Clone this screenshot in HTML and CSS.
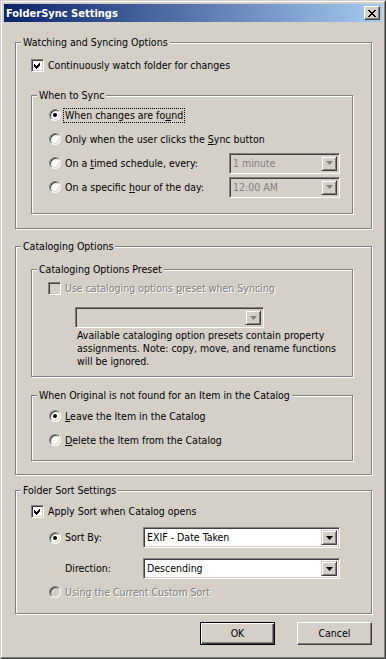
FILE: index.html
```html
<!DOCTYPE html>
<html lang="en">
<head>
    <meta charset="UTF-8">
    <meta name="viewport" content="width=device-width, initial-scale=1.0">
    <title>FolderSync Settings</title>
    <link rel="stylesheet" href="styles.css">
</head>
<body>
    <div class="window">
        <div class="frame">
            <!-- Title bar -->
            <div class="titlebar">
                <span class="title">FolderSync Settings</span>
                <span class="close-btn">
                    <svg width="8" height="7" viewBox="0 0 8 7" shape-rendering="crispEdges"><path fill="#000" d="M0 0h2v1h-2z M6 0h2v1h-2z M1 1h2v1h-2z M5 1h2v1h-2z M2 2h4v1h-4z M3 3h2v1h-2z M2 4h4v1h-4z M1 5h2v1h-2z M5 5h2v1h-2z M0 6h2v1h-2z M6 6h2v1h-2z"/></svg>
                </span>
            </div>

            <div class="dialog">
                <!-- Watching and Syncing -->
                <fieldset class="group">
                    <legend>Watching and Syncing Options</legend>
                    <div class="group-body watch-body">
                        <div class="check-row first-check">
                            <span class="checkbox"><svg width="7" height="7" viewBox="0 0 7 7" shape-rendering="crispEdges"><polygon fill="#000" points="0,2 2,4 6,0 6,3 2,7 0,5"/></svg></span>
                            <span>Continuously watch folder for changes</span>
                        </div>
                        <fieldset class="group sync-group">
                            <legend>When to Sync</legend>
                            <div class="option-list sync-body">
                                <div class="row"><span class="radio on"></span><span class="focus">When changes are fo<u>u</u>nd</span></div>
                                <div class="row"><span class="radio"></span><span>Only when the user clicks the <u>S</u>ync button</span></div>
                                <div class="row">
                                    <span class="radio"></span><span class="timed-label">On a <u>t</u>imed schedule, every:</span>
                                    <span class="combo disabled timed-combo"><span class="combo-text">1 minute</span><span class="combo-btn"><svg width="7" height="4" viewBox="0 0 7 4"><polygon fill="#808080" points="0,0 7,0 3.5,4"/></svg></span></span>
                                </div>
                                <div class="row">
                                    <span class="radio"></span><span class="timed-label">On a specific <u>h</u>our of the day:</span>
                                    <span class="combo disabled timed-combo"><span class="combo-text">12:00 AM</span><span class="combo-btn"><svg width="7" height="4" viewBox="0 0 7 4"><polygon fill="#808080" points="0,0 7,0 3.5,4"/></svg></span></span>
                                </div>
                            </div>
                        </fieldset>
                    </div>
                </fieldset>

                <!-- Cataloging -->
                <fieldset class="group catalog-group">
                    <legend>Cataloging Options</legend>
                    <div class="group-body catalog-body">
                        <fieldset class="group preset-group">
                            <legend>Cataloging Options Preset</legend>
                            <div class="preset-body">
                                <div class="check-row preset-check disabled-text">
                                    <span class="checkbox off"></span>
                                    <span>Use cataloging options <u>p</u>reset when Syncing</span>
                                </div>
                                <span class="combo disabled preset-combo"><span class="combo-text"></span><span class="combo-btn"><svg width="7" height="4" viewBox="0 0 7 4"><polygon fill="#808080" points="0,0 7,0 3.5,4"/></svg></span></span>
                                <p class="note">Available cataloging option presets contain property<br>assignments. Note: copy, move, and rename functions<br>will be ignored.</p>
                            </div>
                        </fieldset>
                        <fieldset class="group original-group">
                            <legend>When Original is not found for an Item in the Catalog</legend>
                            <div class="option-list original-body">
                                <div class="row"><span class="radio on"></span><span><u>L</u>eave the Item in the Catalog</span></div>
                                <div class="row"><span class="radio"></span><span><u>D</u>elete the Item from the Catalog</span></div>
                            </div>
                        </fieldset>
                    </div>
                </fieldset>

                <!-- Folder sort -->
                <fieldset class="group sort-group">
                    <legend>Folder Sort Settings</legend>
                    <div class="group-body sort-body">
                        <div class="check-row sort-check">
                            <span class="checkbox"><svg width="7" height="7" viewBox="0 0 7 7" shape-rendering="crispEdges"><polygon fill="#000" points="0,2 2,4 6,0 6,3 2,7 0,5"/></svg></span>
                            <span>Apply Sort when Catalog opens</span>
                        </div>
                        <div class="sort-row sort-by">
                            <span class="radio on"></span><span class="sort-label">Sort By:</span>
                            <span class="combo sort-combo"><span class="combo-text">EXIF - Date Taken</span><span class="combo-btn"><svg width="7" height="4" viewBox="0 0 7 4"><polygon fill="#000" points="0,0 7,0 3.5,4"/></svg></span></span>
                        </div>
                        <div class="sort-row direction">
                            <span class="sort-label">Direction:</span>
                            <span class="combo sort-combo"><span class="combo-text">Descending</span><span class="combo-btn"><svg width="7" height="4" viewBox="0 0 7 4"><polygon fill="#000" points="0,0 7,0 3.5,4"/></svg></span></span>
                        </div>
                        <div class="row custom-row disabled-text">
                            <span class="radio off"></span><span>Using the Current Custom Sort</span>
                        </div>
                    </div>
                </fieldset>

                <div class="buttons">
                    <button type="button" class="btn default">OK</button>
                    <button type="button" class="btn">Cancel</button>
                </div>
            </div>
        </div>
    </div>
</body>
</html>
```

FILE: styles.css
```css
/* Classic Windows dialog */
body {
    margin: 0;
    font-family: "DejaVu Sans Condensed", "Liberation Sans", sans-serif;
    font-size: 10.5px;
    line-height: 13px;
    color: #000;
    background: #d4d0c8;
}

.window {
    width: 386px;
    height: 659px;
    box-sizing: border-box;
    border: 1px solid;
    border-color: #d4d0c8 #404040 #404040 #d4d0c8;
}

.frame {
    height: 100%;
    box-sizing: border-box;
    border: 1px solid;
    border-color: #fff #808080 #808080 #fff;
    padding: 2px;
}

.titlebar {
    height: 18px;
    display: flex;
    align-items: center;
    justify-content: space-between;
    padding: 0 2px;
    background: linear-gradient(to right, #0a246a, #a6caf0);
}

.title {
    color: #fff;
    font-weight: bold;
    font-size: 11px;
}

.close-btn {
    width: 16px;
    height: 14px;
    box-sizing: border-box;
    display: flex;
    align-items: center;
    justify-content: center;
    background: #d4d0c8;
    border: 1px solid;
    border-color: #fff #404040 #404040 #fff;
    box-shadow: inset -1px -1px 0 #808080;
}

.dialog {
    padding: 14px 10px 0 11px;
}

/* Group boxes */
.group {
    margin: 0;
    padding: 0;
    min-width: 0;
    border: 1px solid #808080;
    box-shadow: inset 1px 1px 0 #fff, 1px 1px 0 #fff;
}

.group legend {
    margin-left: 5px;
    padding: 0 2px;
    line-height: 13px;
    background: #d4d0c8;
}

.watch-body,
.catalog-body {
    padding: 0 18px 14px 15px;
}

.catalog-body {
    padding-bottom: 13px;
}

.sort-body {
    padding: 0 18px 11px 15px;
}

.catalog-group {
    margin-top: 11px;
}

.sort-group {
    margin-top: 9px;
}

.sync-group {
    margin-top: 16px;
}

.preset-group {
    margin-top: 10px;
}

.original-group {
    margin-top: 12px;
}

.option-list {
    display: flex;
    flex-direction: column;
    gap: 4px;
}

.sync-body {
    padding: 3px 0 16px 17px;
}

.original-body {
    padding: 4px 0 10px 17px;
}

.preset-body {
    padding: 0 0 8px 16px;
}

/* Rows */
.row {
    display: flex;
    align-items: center;
    height: 20px;
}

.check-row {
    display: flex;
    align-items: center;
    height: 16px;
}

.first-check {
    margin-top: 8px;
}

.preset-check {
    margin-top: 4px;
}

.sort-check {
    margin-top: 6px;
}

.sort-row {
    display: flex;
    align-items: center;
    height: 21px;
    padding-left: 18px;
}

.sort-by {
    margin-top: 8px;
}

.direction {
    margin-top: 10px;
    padding-left: 34px;
}

.custom-row {
    margin-top: 3px;
    padding-left: 18px;
}

.timed-label {
    width: 164px;
}

.sort-label {
    width: 78px;
}

.focus {
    outline: 1px dotted #000;
    padding: 0 1px;
    margin-left: -1px;
}

.disabled-text {
    color: #808080;
    text-shadow: 1px 1px 0 #fff;
}

/* Checkbox and radio */
.checkbox {
    width: 13px;
    height: 13px;
    flex: none;
    box-sizing: border-box;
    display: flex;
    align-items: center;
    justify-content: center;
    margin-right: 4px;
    background: #fff;
    border: 1px solid;
    border-color: #808080 #fff #fff #808080;
    box-shadow: inset 1px 1px 0 #404040, inset -1px -1px 0 #d4d0c8;
}

.checkbox.off {
    background: #d4d0c8;
}

.radio {
    width: 12px;
    height: 12px;
    flex: none;
    box-sizing: border-box;
    display: flex;
    align-items: center;
    justify-content: center;
    margin-right: 4px;
    border-radius: 50%;
    background: #fff;
    border: 1px solid;
    border-color: #808080 #fff #fff #808080;
    box-shadow: inset 1px 1px 0 #404040, inset -1px -1px 0 #d4d0c8;
}

.radio.on::after {
    content: "";
    width: 4px;
    height: 4px;
    border-radius: 50%;
    background: #000;
}

.radio.off {
    background: #d4d0c8;
}

/* Combo boxes */
.combo {
    height: 21px;
    box-sizing: border-box;
    display: flex;
    align-items: stretch;
    padding: 2px;
    background: #fff;
    border: 1px solid;
    border-color: #808080 #fff #fff #808080;
    box-shadow: inset 1px 1px 0 #404040, inset -1px -1px 0 #d4d0c8;
    text-shadow: none;
}

.combo.disabled {
    background: #d4d0c8;
    color: #808080;
}

.combo-text {
    flex: 1;
    display: flex;
    align-items: center;
    padding-left: 1px;
    white-space: nowrap;
}

.combo-btn {
    width: 16px;
    flex: none;
    box-sizing: border-box;
    display: flex;
    align-items: center;
    justify-content: center;
    background: #d4d0c8;
    border: 1px solid;
    border-color: #d4d0c8 #404040 #404040 #d4d0c8;
    box-shadow: inset 1px 1px 0 #fff, inset -1px -1px 0 #808080;
}

.timed-combo {
    width: 111px;
}

.preset-combo {
    width: 189px;
    margin: 11px 0 0 27px;
}

.sort-combo {
    width: 197px;
}

.note {
    margin: 1px 0 0 29px;
    white-space: nowrap;
}

/* Buttons */
.buttons {
    display: flex;
    justify-content: flex-end;
    gap: 22px;
    margin-top: 8px;
}

.btn {
    width: 75px;
    height: 23px;
    box-sizing: border-box;
    padding: 0;
    font: inherit;
    color: #000;
    background: #d4d0c8;
    border: 1px solid;
    border-color: #fff #404040 #404040 #fff;
    box-shadow: inset -1px -1px 0 #808080;
}

.btn.default {
    border-color: #000;
    box-shadow: inset 1px 1px 0 #fff, inset -1px -1px 0 #404040, inset -2px -2px 0 #808080;
}
```
